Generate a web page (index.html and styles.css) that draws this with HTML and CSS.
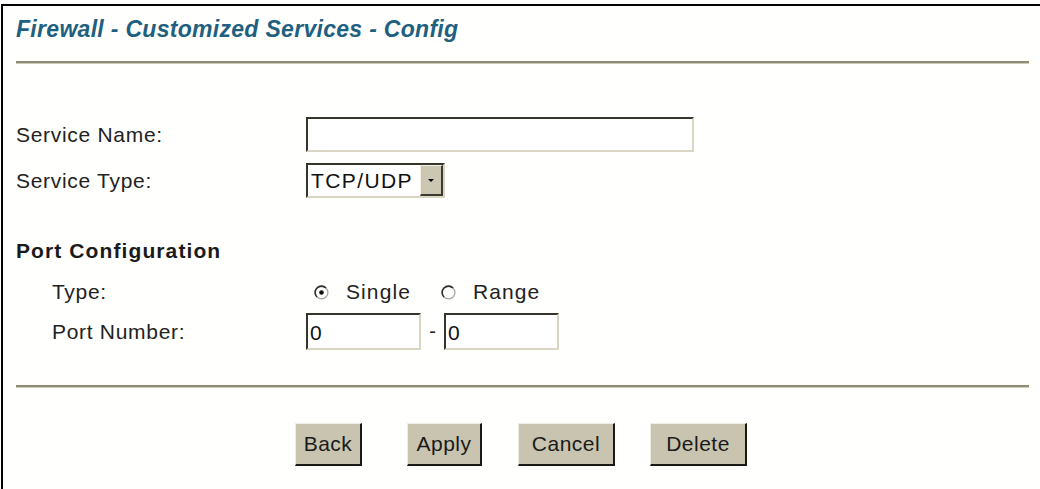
FILE: index.html
```html
<!DOCTYPE html>
<html>
<head>
<meta charset="utf-8">
<link rel="stylesheet" href="styles.css">
</head>
<body>
<div class="frame">
  <h1 class="title">Firewall - Customized Services - Config</h1>
  <div class="rule"></div>

  <div class="form-grid top-grid">
    <div class="label">Service Name:</div>
    <div class="control"><input class="text-input name-input" type="text" value=""></div>
    <div class="label">Service Type:</div>
    <div class="control">
      <div class="fake-select">
        <span class="fake-select-value">TCP/UDP</span>
        <span class="fake-select-btn">
          <svg width="8" height="5" viewBox="0 0 8 5"><path d="M1 1h6L4 4z" fill="#000"/></svg>
        </span>
      </div>
    </div>
  </div>

  <h2 class="section">Port Configuration</h2>

  <div class="form-grid port-grid">
    <div class="label indent">Type:</div>
    <div class="control radios">
      <label class="radio">
        <svg class="radio-icon" width="15" height="15" viewBox="0 0 15 15">
          <circle cx="7.5" cy="7.5" r="6.4" fill="#fff" stroke="#a8a8a0" stroke-width="1.3"/>
          <path d="M3 12 A6.2 6.2 0 0 1 12 3" fill="none" stroke="#2e2e2e" stroke-width="1.6"/>
          <circle cx="7.5" cy="7.5" r="2.3" fill="#111"/>
        </svg>
        <span>Single</span>
      </label>
      <label class="radio">
        <svg class="radio-icon" width="15" height="15" viewBox="0 0 15 15">
          <circle cx="7.5" cy="7.5" r="6.4" fill="#fff" stroke="#a8a8a0" stroke-width="1.3"/>
          <path d="M3 12 A6.2 6.2 0 0 1 12 3" fill="none" stroke="#2e2e2e" stroke-width="1.6"/>
        </svg>
        <span>Range</span>
      </label>
    </div>
    <div class="label indent">Port Number:</div>
    <div class="control ports">
      <input class="text-input port-input" type="text" value="0">
      <span class="dash">-</span>
      <input class="text-input port-input" type="text" value="0">
    </div>
  </div>

  <div class="rule rule-bottom"></div>

  <div class="buttons">
    <button class="btn btn-back">Back</button>
    <button class="btn btn-apply">Apply</button>
    <button class="btn btn-cancel">Cancel</button>
    <button class="btn btn-delete">Delete</button>
  </div>
</div>
</body>
</html>
```
FILE: styles.css
```css
html, body {
  margin: 0;
  padding: 0;
  background: #fffffd;
}

body {
  font-family: "Liberation Sans", Arial, sans-serif;
  color: #1a1a1a;
}

.frame {
  margin: 4px 0 0 1px;
  width: 1032px;
  min-height: 472px;
  border: 2px solid #000;
  border-bottom: none;
  padding: 11px 0 0 13px;
  box-sizing: content-box;
}

.title {
  margin: 0;
  font-size: 23px;
  line-height: 24px;
  font-weight: bold;
  font-style: italic;
  color: #1f5f80;
  letter-spacing: 0.3px;
}

.rule {
  margin: 20px 7px 0 0;
  width: 1013px;
  height: 0;
  border-top: 2px solid #8f8c76;
  border-bottom: 1px solid #cfcbb6;
}

.rule-bottom {
  margin-top: 35px;
}

.form-grid {
  display: grid;
  grid-template-columns: 290px auto;
  align-items: center;
  justify-content: start;
}

.top-grid {
  margin-top: 53px;
  row-gap: 11px;
}

.label {
  font-size: 21px;
  letter-spacing: 0.7px;
  color: #222;
}

.label.indent {
  padding-left: 36px;
}

.control {
  display: flex;
  align-items: center;
}

.text-input {
  box-sizing: border-box;
  margin: 0;
  height: 36px;
  border-style: solid;
  border-width: 2px;
  border-color: #35352c #d9d6c6 #d9d6c6 #35352c;
  background: #fff;
  font-family: "Liberation Sans", Arial, sans-serif;
  font-size: 21px;
  color: #111;
  padding: 2px 2px 0;
  outline: none;
}

.name-input {
  width: 388px;
  height: 35px;
}

.fake-select {
  box-sizing: border-box;
  width: 139px;
  height: 35px;
  display: flex;
  align-items: stretch;
  border-style: solid;
  border-width: 2px;
  border-color: #35352c #d9d6c6 #d9d6c6 #35352c;
  background: #fff;
}

.fake-select-value {
  flex: 1;
  display: flex;
  align-items: center;
  padding-left: 3px;
  font-size: 21px;
  letter-spacing: 1.4px;
  color: #111;
}

.fake-select-btn {
  width: 20px;
  display: flex;
  align-items: center;
  justify-content: center;
  background: #cbc7b2;
  border-style: solid;
  border-width: 1px 2px 2px 1px;
  border-color: #f2f0e6 #3a3a30 #3a3a30 #f2f0e6;
}

.section {
  margin: 41px 0 0;
  font-size: 21px;
  line-height: 24px;
  font-weight: bold;
  letter-spacing: 1.1px;
  color: #1a1a1a;
}

.port-grid {
  margin-top: 15px;
  grid-template-rows: 28px 37px;
  row-gap: 7px;
}

.radios {
  padding-left: 8px;
}

.radio {
  display: flex;
  align-items: center;
  font-size: 21px;
  letter-spacing: 1.1px;
  color: #222;
}

.radio + .radio {
  margin-left: 30px;
}

.radio-icon {
  margin-right: 17px;
}

.port-input {
  width: 115px;
  height: 37px;
}

.dash {
  width: 23px;
  text-align: center;
  font-size: 20px;
  color: #222;
}

.buttons {
  margin: 35px 0 0 -13px;
  width: 1036px;
  display: flex;
  justify-content: center;
}

.btn {
  box-sizing: border-box;
  height: 43px;
  margin: 0;
  padding: 0;
  background: #c8c4af;
  border-style: solid;
  border-width: 1px 2px 2px 1px;
  border-color: #efede3 #1a1a14 #1a1a14 #efede3;
  font-family: "Liberation Sans", Arial, sans-serif;
  font-size: 21px;
  letter-spacing: 0.5px;
  color: #1a1a1a;
}

.btn-back { width: 67px; margin-right: 45px; }
.btn-apply { width: 75px; margin-right: 36px; }
.btn-cancel { width: 97px; margin-right: 35px; }
.btn-delete { width: 97px; }
```
